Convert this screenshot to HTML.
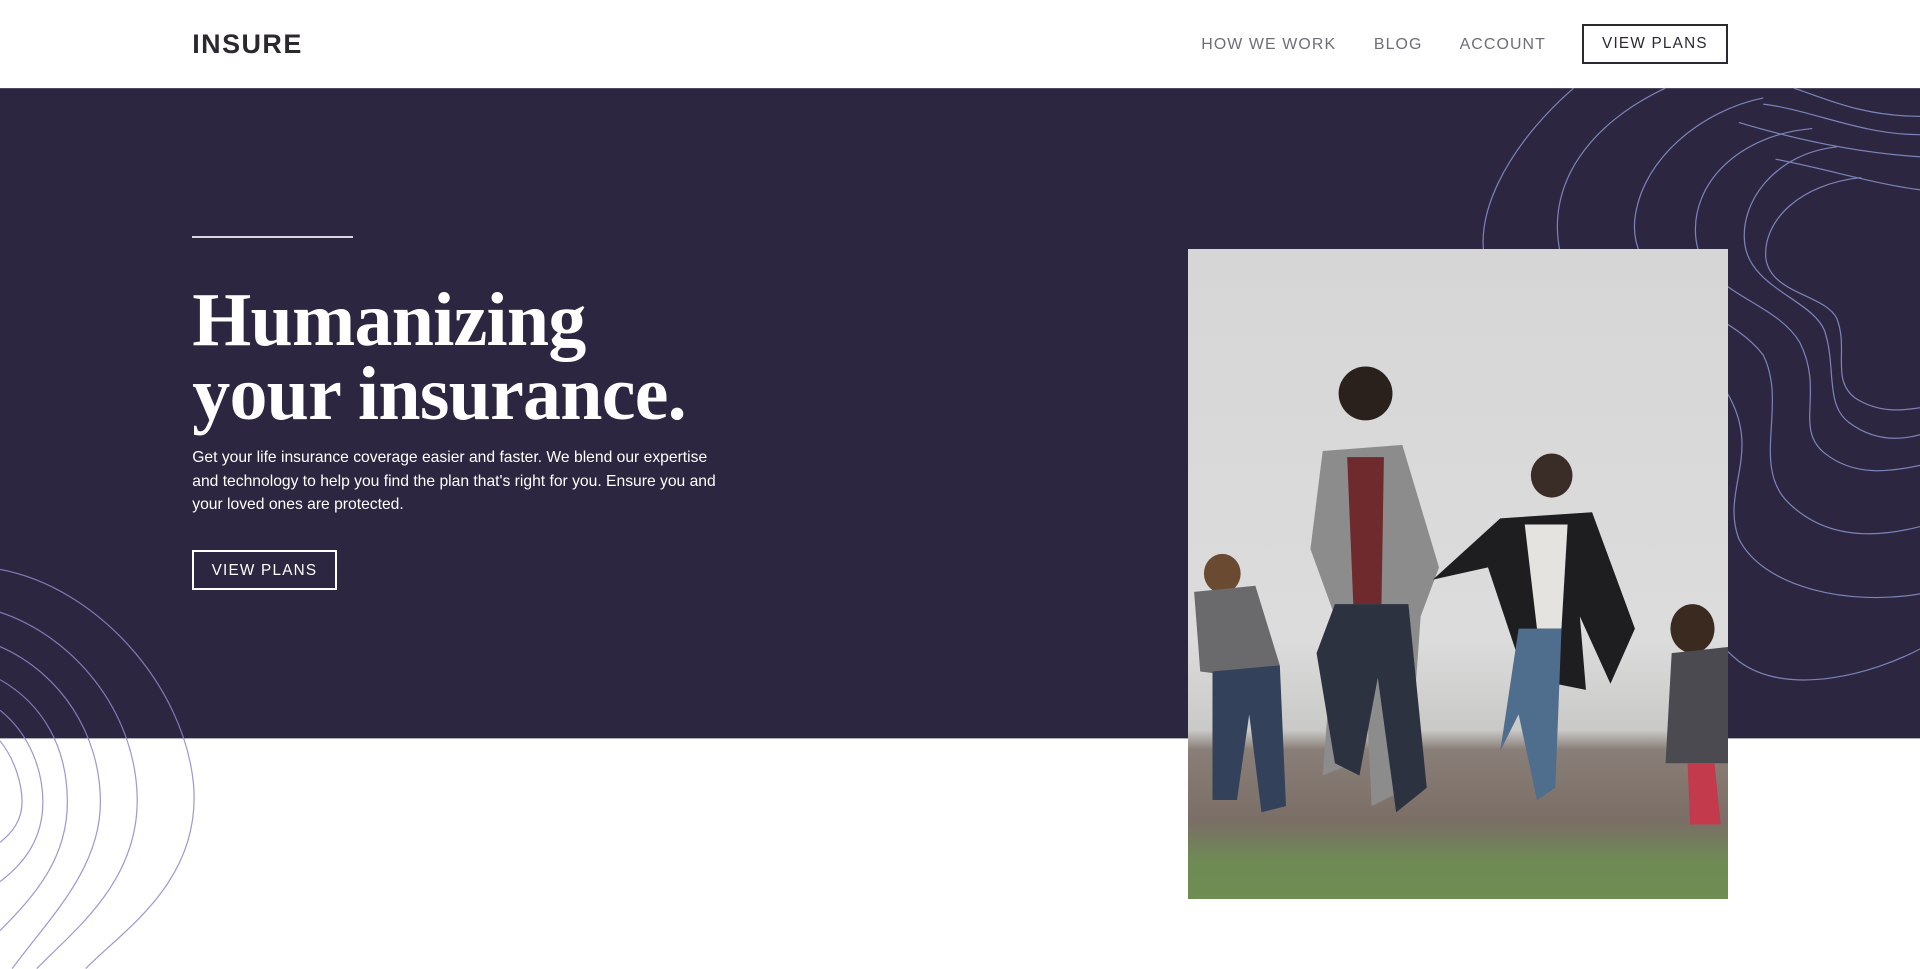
<!DOCTYPE html>
<html><head><meta charset="utf-8">
<style>
html{zoom:1.2245}
body{margin:0;width:1568px;height:791px;overflow:hidden;background:#fff;font-family:"Liberation Sans",sans-serif;position:relative}
header{height:72px;position:relative}
.logo{position:absolute;left:157px;top:24px;font-size:22px;font-weight:700;letter-spacing:1.2px;color:#2c2830}
nav a{position:absolute;top:29px;font-size:13px;letter-spacing:0.9px;color:#6f6d77;text-decoration:none}
.btn{position:absolute;box-sizing:border-box;border:2px solid #2c2830;font-size:12.5px;letter-spacing:1px;text-align:center;color:#2c2830}
.line{position:absolute;left:157px;top:193px;width:131px;height:1px;background:#d8d6e0}
h1{position:absolute;left:157px;top:232px;margin:0;font-family:"Liberation Serif",serif;font-weight:700;font-size:62px;line-height:60px;color:#fff;letter-spacing:-0.6px}
p{position:absolute;left:157px;top:364px;width:438px;margin:0;font-size:12.8px;line-height:19.5px;color:#fff}
.photo{position:absolute;left:970px;top:203px;width:441px;height:531px;overflow:hidden;
background:linear-gradient(180deg,#d6d6d6 0%,#dcdcdc 60%,#c9c9c7 74%,#8a7f78 77%,#7a6e66 88%,#6f8a55 94%,#6e8d52 100%)}
svg{position:absolute}
</style></head><body>
<header>
<div class="logo">INSURE</div>
<nav><a style="left:981px">HOW WE WORK</a><a style="left:1122px">BLOG</a><a style="left:1192px">ACCOUNT</a></nav>
<div class="btn" style="left:1292px;top:20px;width:119px;height:32px;line-height:30px">VIEW PLANS</div>
</header>
<div style="position:absolute;left:0;top:603px;width:1568px;height:188px;background:#fff"></div>
<svg style="left:0;top:0" width="1568" height="791" viewBox="0 0 1568 791">
<rect x="0" y="72" width="1568" height="531" fill="#2c2640"/>
<g fill="none" stroke="#8f87c9" stroke-width="1" opacity=".85">
<path d="M0 465 C80 480 150 560 158 640 C165 720 100 760 70 791"/>
<path d="M0 500 C60 520 110 580 112 650 C114 720 60 760 30 791"/>
<path d="M0 528 C50 550 82 600 82 655 C82 710 40 750 10 791"/>
<path d="M0 555 C35 575 55 610 55 655 C55 700 30 730 0 760"/>
<path d="M0 580 C25 600 35 630 35 655 C35 685 20 705 0 720"/>
<path d="M0 605 C12 620 18 640 18 655 C18 670 10 680 0 688"/>
</g>
<g fill="none" stroke="#8f9bd6" stroke-width="1" opacity=".8">
<path d="M1285 72 C1230 120 1200 180 1215 220 C1240 280 1330 260 1375 300 C1410 330 1395 390 1385 440 C1375 490 1395 520 1420 540 C1460 570 1530 550 1568 530"/>
<path d="M1360 72 C1300 100 1260 150 1275 210 C1290 260 1380 270 1410 320 C1440 370 1405 400 1420 440 C1440 480 1510 495 1568 485"/>
<path d="M1440 80 C1390 90 1340 130 1335 180 C1330 240 1410 250 1440 290 C1460 330 1430 380 1460 410 C1490 440 1530 440 1568 430"/>
<path d="M1480 105 C1420 110 1380 150 1385 195 C1390 240 1450 245 1470 280 C1490 320 1465 350 1490 370 C1515 390 1545 385 1568 380"/>
<path d="M1500 120 C1450 125 1420 165 1425 200 C1430 235 1480 245 1490 270 C1500 300 1490 330 1510 345 C1530 360 1550 360 1568 355"/>
<path d="M1520 145 C1470 150 1440 180 1442 210 C1445 240 1490 240 1500 260 C1510 285 1495 310 1515 325 C1535 338 1555 335 1568 333"/>
<path d="M1465 72 C1490 80 1520 95 1568 95"/>
<path d="M1440 85 C1480 90 1520 110 1568 110"/>
<path d="M1420 100 C1470 115 1520 125 1568 128"/>
<path d="M1450 130 C1500 140 1530 150 1568 155"/>
</g>
</svg>
<div class="line"></div>
<h1>Humanizing<br>your insurance.</h1>
<p>Get your life insurance coverage easier and faster. We blend our expertise and technology to help you find the plan that's right for you. Ensure you and your loved ones are protected.</p>
<div class="btn" style="left:157px;top:449px;width:118px;height:33px;line-height:31px;border-color:#fff;color:#fff">VIEW PLANS</div>
<div class="photo">
<svg width="441" height="531" viewBox="0 0 441 531">
<g>
<ellipse cx="145" cy="118" rx="22" ry="22" fill="#2a211c"/>
<path d="M110 165 L175 160 L205 260 L190 300 L180 440 L150 455 L145 350 L135 420 L110 430 L120 300 L100 245 Z" fill="#8c8c8c"/>
<path d="M130 170 L160 170 L158 290 L135 290 Z" fill="#6e2a2c"/>
<path d="M120 290 L180 290 L195 440 L170 460 L155 350 L140 430 L120 420 L105 330 Z" fill="#2c3240"/>
<ellipse cx="297" cy="185" rx="17" ry="18" fill="#3a2c26"/>
<path d="M255 220 L330 215 L365 310 L345 355 L320 300 L325 360 L275 350 L245 260 L200 270 Z" fill="#1e1e20"/>
<path d="M275 225 L310 225 L305 310 L285 310 Z" fill="#e5e3df"/>
<path d="M270 310 L305 310 L300 440 L285 450 L270 380 L255 410 Z" fill="#4f6e8e"/>
<ellipse cx="28" cy="265" rx="15" ry="16" fill="#6a4a30"/>
<path d="M5 280 L55 275 L75 340 L50 350 L10 345 Z" fill="#6a6a6c"/>
<path d="M20 345 L75 340 L80 455 L60 460 L50 380 L40 450 L20 450 Z" fill="#34415a"/>
<ellipse cx="412" cy="310" rx="18" ry="20" fill="#3a2a20"/>
<path d="M395 330 L441 325 L441 420 L390 420 Z" fill="#4a4a50"/>
<path d="M408 420 L430 420 L435 470 L410 470 Z" fill="#c23a4c"/>
</g>
</svg>
</div>
</body></html>
